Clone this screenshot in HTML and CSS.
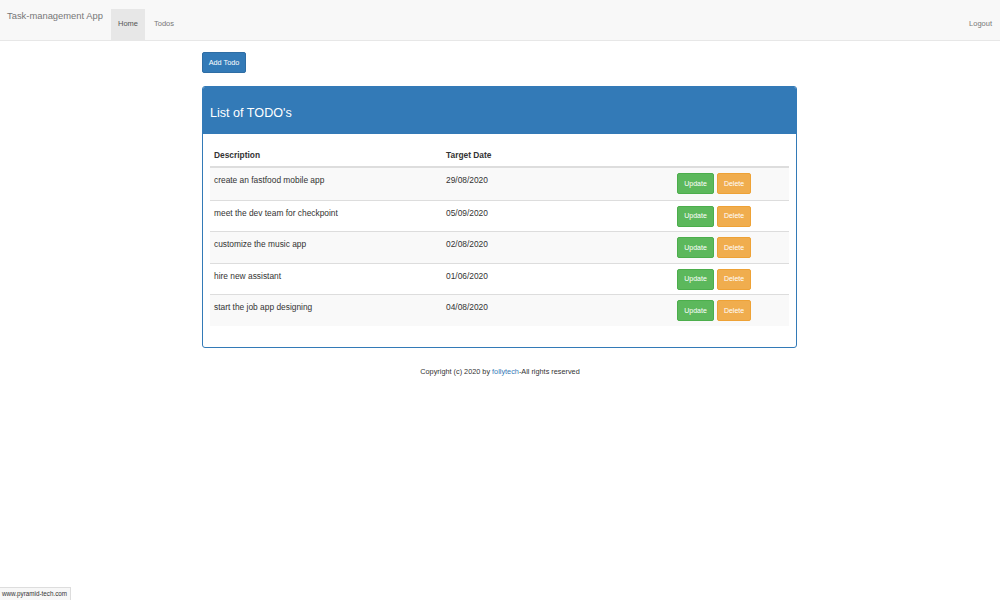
FILE: index.html
```html
<!DOCTYPE html>
<html>
<head>
<meta charset="utf-8">
<title>Task-management App</title>
<link rel="stylesheet" href="styles.css">
</head>
<body>
<nav class="navbar">
  <span class="brand">Task-management App</span>
  <ul class="nav-links">
    <li class="nav-item active">Home</li>
    <li class="nav-item">Todos</li>
  </ul>
  <span class="nav-item logout">Logout</span>
</nav>

<main class="container">
  <button class="btn btn-primary add-btn">Add Todo</button>

  <section class="panel">
    <div class="panel-heading">List of TODO's</div>
    <div class="panel-body">
      <div class="todo-table">
        <div class="row head">
          <div class="cell">Description</div>
          <div class="cell">Target Date</div>
          <div class="cell"></div>
        </div>
        <div class="row striped">
          <div class="cell">create an fastfood mobile app</div>
          <div class="cell">29/08/2020</div>
          <div class="cell actions"><button class="btn btn-success">Update</button><button class="btn btn-warning">Delete</button></div>
        </div>
        <div class="row">
          <div class="cell">meet the dev team for checkpoint</div>
          <div class="cell">05/09/2020</div>
          <div class="cell actions"><button class="btn btn-success">Update</button><button class="btn btn-warning">Delete</button></div>
        </div>
        <div class="row striped">
          <div class="cell">customize the music app</div>
          <div class="cell">02/08/2020</div>
          <div class="cell actions"><button class="btn btn-success">Update</button><button class="btn btn-warning">Delete</button></div>
        </div>
        <div class="row">
          <div class="cell">hire new assistant</div>
          <div class="cell">01/06/2020</div>
          <div class="cell actions"><button class="btn btn-success">Update</button><button class="btn btn-warning">Delete</button></div>
        </div>
        <div class="row striped">
          <div class="cell">start the job app designing</div>
          <div class="cell">04/08/2020</div>
          <div class="cell actions"><button class="btn btn-success">Update</button><button class="btn btn-warning">Delete</button></div>
        </div>
      </div>
    </div>
  </section>

  <footer class="footer">Copyright (c) 2020 by <a href="#" class="link">follytech</a>-All rights reserved</footer>
</main>

<div class="statusbar">www.pyramid-tech.com</div>
</body>
</html>
```
FILE: styles.css
```css
* { box-sizing: border-box; }

body {
  margin: 0;
  font-family: "Liberation Sans", Arial, sans-serif;
  color: #333;
  background: #fff;
}

.navbar {
  display: flex;
  align-items: stretch;
  height: 41px;
  background: #f8f8f8;
  border-bottom: 1px solid #e7e7e7;
}

.brand {
  font-size: 9.4px;
  color: #777;
  padding: 10px 8px 0 7px;
  line-height: 12px;
  width: 111px;
  white-space: nowrap;
}

.nav-links {
  display: flex;
  list-style: none;
  margin: 9px 0 0 0;
  padding: 0;
}

.nav-item {
  font-size: 7.5px;
  color: #777;
  padding: 10px 7px 0 7px;
  line-height: 10px;
}

.nav-links .nav-item + .nav-item { margin-left: 2px; }

.nav-item.active {
  background: #e7e7e7;
  color: #555;
}

.logout {
  margin-left: auto;
  padding: 19px 8px 0 7px;
}

.container {
  width: 596px;
  margin: 0 auto;
  padding-top: 11px;
}

.btn {
  font-family: inherit;
  border: 1px solid transparent;
  border-radius: 2px;
  color: #fff;
  font-size: 7px;
  line-height: 10px;
  cursor: pointer;
}

.btn-primary {
  background: #337ab7;
  border-color: #2e6da4;
}

.add-btn {
  display: block;
  width: 44px;
  height: 21px;
  padding: 0;
  margin-bottom: 13px;
  font-size: 7.3px;
}

.panel {
  width: 595px;
  border: 1px solid #337ab7;
  border-radius: 3px;
  overflow: hidden;
}

.panel-heading {
  background: #337ab7;
  color: #fff;
  font-size: 12.6px;
  height: 47px;
  padding: 5px 7px 0 7px;
  display: flex;
  align-items: center;
}

.panel-body {
  padding: 12px 7px 21px 7px;
}

.todo-table {
  display: flex;
  flex-direction: column;
}

.row {
  display: grid;
  grid-template-columns: 232px 231px 1fr;
  height: 31.6px;
  border-top: 1px solid #ddd;
  font-size: 8.4px;
}

.row.head {
  height: 22px;
  border-top: 0;
  border-bottom: 2px solid #ddd;
  font-weight: bold;
}

.row.head + .row { border-top: 0; }

.row.striped { background: #f9f9f9; }

.cell {
  padding: 6px 4px 0 4px;
  line-height: 12px;
}

.row.head .cell { padding-top: 3px; }

.actions {
  display: flex;
  gap: 3px;
  padding-top: 5px;
}

.actions .btn {
  height: 21px;
  padding: 0;
}

.btn-success {
  width: 37px;
  background: #5cb85c;
  border-color: #4cae4c;
}

.btn-warning {
  width: 34px;
  background: #f0ad4e;
  border-color: #eea236;
}

.footer {
  text-align: center;
  font-size: 7.3px;
  margin-top: 19px;
}

.link {
  color: #337ab7;
  text-decoration: none;
}

.statusbar {
  position: fixed;
  left: 0;
  bottom: 0;
  font-size: 6.3px;
  color: #333;
  background: #f7f7f7;
  border: 1px solid #ddd;
  border-left: 0;
  border-bottom: 0;
  padding: 2px 3px 2px 2px;
  line-height: 8px;
}
```
